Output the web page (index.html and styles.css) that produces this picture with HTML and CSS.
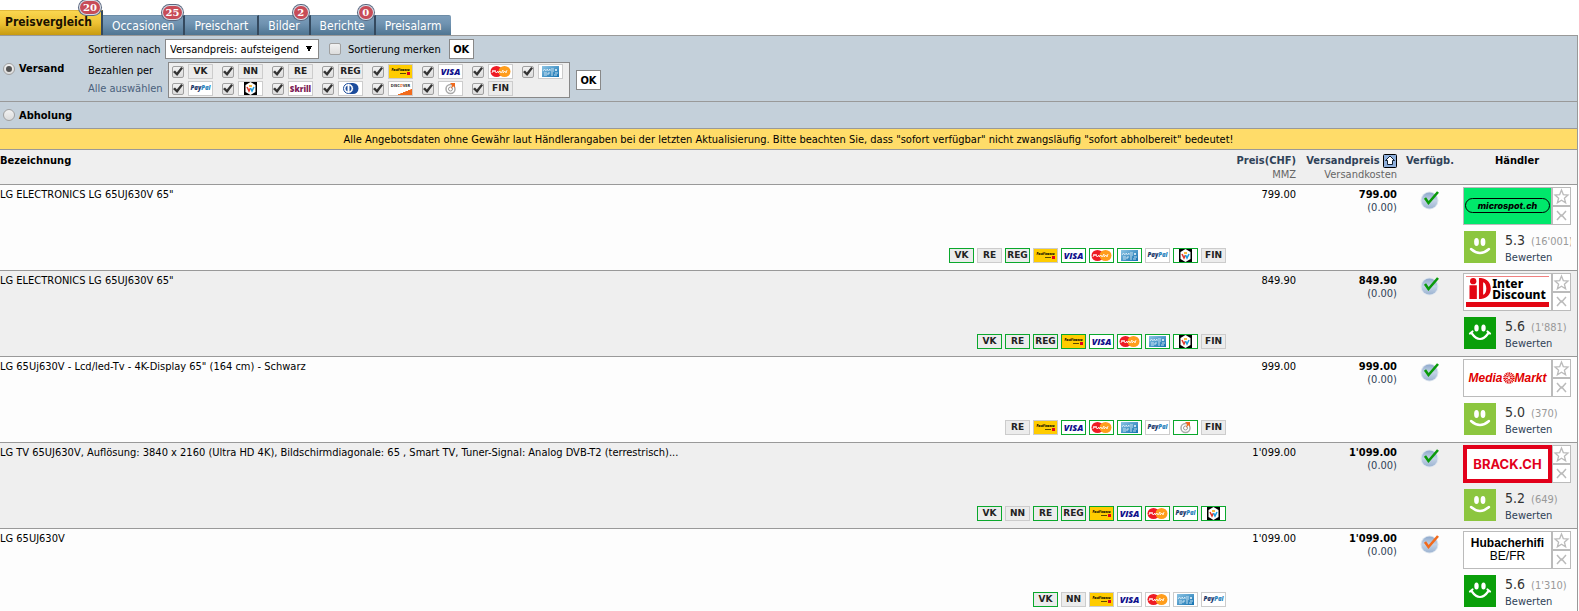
FILE: index.html
```
<!DOCTYPE html>
<html lang="de">
<head>
    <meta charset="UTF-8">
    <meta name="viewport" content="width=device-width, initial-scale=1.0">
    <title>LG 65UJ630V - Preisvergleich</title>
    <link rel="stylesheet" href="styles.css">
</head>
<body>
<!-- Shared icons -->
<svg class="sprite" aria-hidden="true">
    <defs>
        <linearGradient id="disc" x1="0" y1="0" x2="0" y2="1">
            <stop offset="0" stop-color="#8fa9cc"/>
            <stop offset="0.5" stop-color="#c3d3e6"/>
            <stop offset="1" stop-color="#9db4d2"/>
        </linearGradient>
        <linearGradient id="amexBlue" x1="0" y1="0" x2="1" y2="1">
            <stop offset="0" stop-color="#8cc4e4"/>
            <stop offset="1" stop-color="#1170b0"/>
        </linearGradient>
    </defs>
    <symbol id="mastercard" viewBox="0 0 23 13">
        <rect width="23" height="13" fill="#fff"/>
        <ellipse cx="7.500" cy="6.500" rx="6" ry="5.500" fill="#ee1c25"/>
        <ellipse cx="15.500" cy="6.500" rx="6" ry="5.500" fill="#ff9d1c"/>
        <path d="M3 8l1-3 1 2 1-2 1 3 2-2v2l2-2 1 2 2-3v3l2-2 1 2 1-3" fill="none" stroke="#fff" stroke-width="0.800"/>
    </symbol>
    <symbol id="amex" viewBox="0 0 23 13">
        <rect width="23" height="13" fill="#fff"/>
        <rect x="3" y="1" width="17" height="11" fill="url(#amexBlue)"/>
        <path d="M4 6l1.500-2L7 6M8 6V4l1.500 1.500L11 4v2M12 4h3M12 6h3M16 4l2 2M18 4l-2 2M5 8h3M5 10h3M9 10V8h2M12 8h2M12 10h2M16 8h3M15 10h3" fill="none" stroke="#e4f2fa" stroke-width="0.800"/>
    </symbol>
    <symbol id="twint" viewBox="0 0 23 13">
        <rect width="23" height="13" fill="#fff"/>
        <rect x="5" width="13" height="13" fill="#000"/>
        <path d="M11.500 0l5 3v7l-5 3-5-3V3z" fill="#fff"/>
        <path d="M8 5l2 4 1.500-3" stroke="#e23a2e" stroke-width="1.600" fill="none"/>
        <path d="M11.500 6l1.500 3 2-4" stroke="#1ea0e0" stroke-width="1.600" fill="none"/>
        <path d="M10 4h3" stroke="#f7a600" stroke-width="1.500"/>
    </symbol>
    <symbol id="diners" viewBox="0 0 23 13">
        <rect width="23" height="13" fill="#fff"/>
        <path d="M11 1h3a5.500 5.500 0 0 1 0 11h-3z" fill="#1c4c9c"/>
        <circle cx="9.500" cy="6.500" r="5" fill="#fff" stroke="#1c4c9c"/>
        <path d="M8.500 3.500a3.200 3.200 0 0 0 0 6zM10.500 3.500a3.200 3.200 0 0 1 0 6z" fill="#1c4c9c"/>
    </symbol>
    <symbol id="points" viewBox="0 0 23 13">
        <rect width="23" height="13" fill="#fff"/>
        <circle cx="11.500" cy="7" r="4.500" fill="none" stroke="#aaa" stroke-width="1.500"/>
        <circle cx="11.500" cy="7" r="2" fill="none" stroke="#999"/>
        <path d="M11 1h5v5l-1.500-2-2.500 3 1-4z" fill="#f06a1e"/>
    </symbol>
    <symbol id="available" viewBox="0 0 20 20">
        <circle cx="9.500" cy="10.500" r="9" fill="#dde5ee"/>
        <circle cx="9.500" cy="10.500" r="8" fill="url(#disc)"/>
        <path d="M5 8l3.500 5L18 2" fill="none" stroke="currentColor" stroke-width="2.600"/>
    </symbol>
    <symbol id="star" viewBox="0 0 17 17">
        <path d="M8.500 2l1.800 4.600 4.700.4-3.600 3.200 1.200 4.600-4.100-2.600-4.100 2.600 1.200-4.600L2 7l4.700-.4z" fill="#fff" stroke="#bbb" stroke-width="1.300"/>
    </symbol>
    <symbol id="cross" viewBox="0 0 17 17">
        <path d="M4 4l3.500 4h2L13 4M4 13l3.500-4h2l3.500 4" fill="none" stroke="#bbb" stroke-width="1.500"/>
    </symbol>
    <symbol id="smile" viewBox="0 0 32 32">
        <ellipse cx="12.500" cy="11" rx="2.400" ry="4" fill="#fff"/>
        <ellipse cx="19" cy="11" rx="2.400" ry="4" fill="#fff"/>
        <path d="M7 18q9 8 18 0" fill="none" stroke="#fff" stroke-width="2.400" stroke-linecap="round"/>
    </symbol>
    <symbol id="grin" viewBox="0 0 32 32">
        <ellipse cx="12.500" cy="11" rx="2.200" ry="3.600" fill="#fff"/>
        <ellipse cx="19.500" cy="11" rx="2.200" ry="3.600" fill="#fff"/>
        <path d="M7.500 16q8.500 12 17 0M6 16.500l2.500-2M26 16.500l-2.500-2" fill="none" stroke="#fff" stroke-width="2.200" stroke-linecap="round"/>
    </symbol>
</svg>

<nav class="tabs">
    <a href="#" class="tab active">Preisvergleich<span class="count">20</span></a>
    <a href="#" class="tab">Occasionen<span class="count">25</span></a>
    <a href="#" class="tab">Preischart</a>
    <a href="#" class="tab">Bilder<span class="count">2</span></a>
    <a href="#" class="tab">Berichte<span class="count">0</span></a>
    <a href="#" class="tab">Preisalarm</a>
</nav>

<div class="content">
    <form class="filter">
        <div class="shipping">
            <label class="mode"><input type="radio" name="mode" checked> Versand</label>
            <div class="options">
                <div class="line">
                    <label class="caption" for="sort">Sortieren nach</label>
                    <select id="sort">
                        <option>Versandpreis: aufsteigend</option>
                        <option>Versandpreis: absteigend</option>
                    </select>
                    <label class="remember"><input type="checkbox"> Sortierung merken</label>
                    <button type="button">OK</button>
                </div>
                <div class="line">
                    <div class="captions">
                        <span>Bezahlen per</span>
                        <a href="#">Alle auswählen</a>
                    </div>
                    <div class="payments">
                        <label><input type="checkbox" checked><span class="pay">VK</span></label>
                        <label><input type="checkbox" checked><span class="pay">NN</span></label>
                        <label><input type="checkbox" checked><span class="pay">RE</span></label>
                        <label><input type="checkbox" checked><span class="pay">REG</span></label>
                        <label><input type="checkbox" checked><span class="pay postfinance">PostFinance</span></label>
                        <label><input type="checkbox" checked><span class="pay visa">VISA</span></label>
                        <label><input type="checkbox" checked aria-label="Mastercard"><svg class="pay"><use href="#mastercard"/></svg></label>
                        <label><input type="checkbox" checked aria-label="American Express"><svg class="pay"><use href="#amex"/></svg></label>
                        <label><input type="checkbox" checked><span class="pay paypal">Pay<i>Pal</i></span></label>
                        <label><input type="checkbox" checked aria-label="Twint"><svg class="pay"><use href="#twint"/></svg></label>
                        <label><input type="checkbox" checked><span class="pay skrill">Skrill</span></label>
                        <label><input type="checkbox" checked aria-label="Diners Club"><svg class="pay"><use href="#diners"/></svg></label>
                        <label><input type="checkbox" checked><span class="pay discover">DISC<i>O</i>VER</span></label>
                        <label><input type="checkbox" checked aria-label="Punkte"><svg class="pay"><use href="#points"/></svg></label>
                        <label><input type="checkbox" checked><span class="pay">FIN</span></label>
                    </div>
                    <button type="button">OK</button>
                </div>
            </div>
        </div>
        <div class="pickup">
            <label class="mode"><input type="radio" name="mode"> Abholung</label>
        </div>
    </form>

    <p class="notice">Alle Angebotsdaten ohne Gewähr laut Händlerangaben bei der letzten Aktualisierung. Bitte beachten Sie, dass "sofort verfügbar" nicht zwangsläufig "sofort abholbereit" bedeutet!</p>

    <table class="offers">
        <thead>
        <tr>
            <th class="name">Bezeichnung</th>
            <th class="price"><a href="#">Preis(CHF)</a><small>MMZ</small></th>
            <th class="total">
                <a href="#">Versandpreis
                    <svg class="sort-icon" viewBox="0 0 14 14">
                        <rect x="0.500" y="0.500" width="13" height="13" rx="1" fill="#8fb0dc" stroke="#000"/>
                        <path d="M7 2l4.500 4.500H9.500v4h-5v-4h-2z" fill="#fff" stroke="#123" stroke-width="1"/>
                    </svg>
                </a>
                <small>Versandkosten</small>
            </th>
            <th class="stock"><a href="#">Verfügb.</a></th>
            <th class="dealer">Händler</th>
        </tr>
        </thead>
        <tbody>
        <tr>
            <td class="name">
                <div class="offer">
                    <span>LG ELECTRONICS LG 65UJ630V 65"</span>
                    <div class="methods">
                        <span class="pay ok">VK</span>
                        <span class="pay">RE</span>
                        <span class="pay ok">REG</span>
                        <span class="pay postfinance">PostFinance</span>
                        <span class="pay visa ok">VISA</span>
                        <svg class="pay ok"><use href="#mastercard"/></svg>
                        <svg class="pay ok"><use href="#amex"/></svg>
                        <span class="pay paypal">Pay<i>Pal</i></span>
                        <svg class="pay ok"><use href="#twint"/></svg>
                        <span class="pay">FIN</span>
                    </div>
                </div>
            </td>
            <td class="price">799.00</td>
            <td class="total"><b>799.00</b><a href="#">(0.00)</a></td>
            <td class="stock"><svg class="available"><use href="#available"/></svg></td>
            <td class="dealer">
                <div class="shop">
                    <a href="#" class="logo microspot"><span>microspot.ch</span></a>
                    <div class="actions">
                        <button type="button" aria-label="Merken"><svg><use href="#star"/></svg></button>
                        <button type="button" aria-label="Ausblenden"><svg><use href="#cross"/></svg></button>
                    </div>
                </div>
                <div class="rating">
                    <svg class="face good"><use href="#smile"/></svg>
                    <div class="score"><span>5.3 <small>(16'001)</small></span><a href="#">Bewerten</a></div>
                </div>
            </td>
        </tr>
        <tr>
            <td class="name">
                <div class="offer">
                    <span>LG ELECTRONICS LG 65UJ630V 65"</span>
                    <div class="methods">
                        <span class="pay ok">VK</span>
                        <span class="pay ok">RE</span>
                        <span class="pay ok">REG</span>
                        <span class="pay postfinance ok">PostFinance</span>
                        <span class="pay visa ok">VISA</span>
                        <svg class="pay ok"><use href="#mastercard"/></svg>
                        <svg class="pay ok"><use href="#amex"/></svg>
                        <svg class="pay ok"><use href="#twint"/></svg>
                        <span class="pay">FIN</span>
                    </div>
                </div>
            </td>
            <td class="price">849.90</td>
            <td class="total"><b>849.90</b><a href="#">(0.00)</a></td>
            <td class="stock"><svg class="available"><use href="#available"/></svg></td>
            <td class="dealer">
                <div class="shop">
                    <a href="#" class="logo interdiscount">
                        <svg viewBox="0 0 20 20">
                            <circle cx="3.500" cy="3" r="3"/>
                            <path d="M0 7h7v13H0zM9 0c15-1 15 21 0 20zM13 4v12c4-1 4-11 0-12z" fill-rule="evenodd"/>
                        </svg>
                        <span>Inter<br>Discount</span>
                    </a>
                    <div class="actions">
                        <button type="button" aria-label="Merken"><svg><use href="#star"/></svg></button>
                        <button type="button" aria-label="Ausblenden"><svg><use href="#cross"/></svg></button>
                    </div>
                </div>
                <div class="rating">
                    <svg class="face top"><use href="#grin"/></svg>
                    <div class="score"><span>5.6 <small>(1'881)</small></span><a href="#">Bewerten</a></div>
                </div>
            </td>
        </tr>
        <tr>
            <td class="name">
                <div class="offer">
                    <span>LG 65Uj630V - Lcd/led-Tv - 4K-Display 65" (164 cm) - Schwarz</span>
                    <div class="methods">
                        <span class="pay">RE</span>
                        <span class="pay postfinance">PostFinance</span>
                        <span class="pay visa ok">VISA</span>
                        <svg class="pay ok"><use href="#mastercard"/></svg>
                        <svg class="pay ok"><use href="#amex"/></svg>
                        <span class="pay paypal">Pay<i>Pal</i></span>
                        <svg class="pay ok"><use href="#points"/></svg>
                        <span class="pay">FIN</span>
                    </div>
                </div>
            </td>
            <td class="price">999.00</td>
            <td class="total"><b>999.00</b><a href="#">(0.00)</a></td>
            <td class="stock"><svg class="available"><use href="#available"/></svg></td>
            <td class="dealer">
                <div class="shop">
                    <a href="#" class="logo mediamarkt">
                        <span>Media</span>
                        <svg viewBox="0 0 12 12">
                            <circle cx="6" cy="6" r="4.500" fill="none" stroke="#df0000" stroke-width="2.500" stroke-dasharray="1 0.600"/>
                            <circle cx="6" cy="6" r="2" fill="none" stroke="#df0000" stroke-width="2" stroke-dasharray="1 0.600"/>
                        </svg>
                        <span>Markt</span>
                    </a>
                    <div class="actions">
                        <button type="button" aria-label="Merken"><svg><use href="#star"/></svg></button>
                        <button type="button" aria-label="Ausblenden"><svg><use href="#cross"/></svg></button>
                    </div>
                </div>
                <div class="rating">
                    <svg class="face good"><use href="#smile"/></svg>
                    <div class="score"><span>5.0 <small>(370)</small></span><a href="#">Bewerten</a></div>
                </div>
            </td>
        </tr>
        <tr>
            <td class="name">
                <div class="offer">
                    <span>LG TV 65UJ630V, Auflösung: 3840 x 2160 (Ultra HD 4K), Bildschirmdiagonale: 65 , Smart TV, Tuner-Signal: Analog DVB-T2 (terrestrisch)...</span>
                    <div class="methods">
                        <span class="pay ok">VK</span>
                        <span class="pay">NN</span>
                        <span class="pay ok">RE</span>
                        <span class="pay ok">REG</span>
                        <span class="pay postfinance ok">PostFinance</span>
                        <span class="pay visa ok">VISA</span>
                        <svg class="pay ok"><use href="#mastercard"/></svg>
                        <span class="pay paypal ok">Pay<i>Pal</i></span>
                        <svg class="pay ok"><use href="#twint"/></svg>
                    </div>
                </div>
            </td>
            <td class="price">1'099.00</td>
            <td class="total"><b>1'099.00</b><a href="#">(0.00)</a></td>
            <td class="stock"><svg class="available"><use href="#available"/></svg></td>
            <td class="dealer">
                <div class="shop">
                    <a href="#" class="logo brack"><span>BRACK.CH</span></a>
                    <div class="actions">
                        <button type="button" aria-label="Merken"><svg><use href="#star"/></svg></button>
                        <button type="button" aria-label="Ausblenden"><svg><use href="#cross"/></svg></button>
                    </div>
                </div>
                <div class="rating">
                    <svg class="face good"><use href="#smile"/></svg>
                    <div class="score"><span>5.2 <small>(649)</small></span><a href="#">Bewerten</a></div>
                </div>
            </td>
        </tr>
        <tr>
            <td class="name">
                <div class="offer">
                    <span>LG 65UJ630V</span>
                    <div class="methods">
                        <span class="pay ok">VK</span>
                        <span class="pay">NN</span>
                        <span class="pay postfinance">PostFinance</span>
                        <span class="pay visa">VISA</span>
                        <svg class="pay"><use href="#mastercard"/></svg>
                        <svg class="pay"><use href="#amex"/></svg>
                        <span class="pay paypal">Pay<i>Pal</i></span>
                    </div>
                </div>
            </td>
            <td class="price">1'099.00</td>
            <td class="total"><b>1'099.00</b><a href="#">(0.00)</a></td>
            <td class="stock"><svg class="available soon"><use href="#available"/></svg></td>
            <td class="dealer">
                <div class="shop">
                    <a href="#" class="logo hubacher"><span><b>Hubacherhifi</b><br>BE/FR</span></a>
                    <div class="actions">
                        <button type="button" aria-label="Merken"><svg><use href="#star"/></svg></button>
                        <button type="button" aria-label="Ausblenden"><svg><use href="#cross"/></svg></button>
                    </div>
                </div>
                <div class="rating">
                    <svg class="face top"><use href="#grin"/></svg>
                    <div class="score"><span>5.6 <small>(1'310)</small></span><a href="#">Bewerten</a></div>
                </div>
            </td>
        </tr>
        </tbody>
    </table>
</div>
</body>
</html>
```
FILE: styles.css
```
* {
  box-sizing: border-box;
}

body {
  margin: 0;
  font: 11px/13px Tahoma, "DejaVu Sans Condensed", sans-serif;
  color: #000;
  background-color: #fff;
}

a {
  color: #2f4257;
  text-decoration: none;
}

.sprite {
  position: absolute;
  width: 0;
  height: 0;
}

/* Tabs */
.tabs {
  display: flex;
  align-items: flex-end;
  height: 35px;
}

.tab {
  position: relative;
  height: 20px;
  padding: 0 9px;
  font-size: 12px;
  line-height: 20px;
  color: #fff;
  white-space: nowrap;
  background: linear-gradient(#7c9dba, #7093b1 40%, #4f7592);
  border-right: 2px solid #34495e;
  border-top: 1px solid #6d8ca6;
}

.tab.active {
  height: 25px;
  padding: 0 9px 0 5px;
  line-height: 22px;
  font-weight: bold;
  color: #1a1200;
  background: linear-gradient(#fad64f, #eec234 50%, #c79a10);
  border-top-color: #e2b93a;
}

.tab:last-child {
  padding-right: 10px;
  border-right: 0;
  border-top-right-radius: 2px;
}

.count {
  position: absolute;
  top: -10px;
  right: 1px;
  min-width: 14px;
  padding: 0 3px;
  font: bold 10px/13px "DejaVu Serif", serif;
  text-align: center;
  color: #fff;
  background-color: #c74c58;
  border-radius: 7px;
  box-shadow: 0 0 0 1px #d8dde6, 0 0 0 2px #5b6880;
}

/* Filter */
.content {
  margin-right: 1px;
  border-top: 1px solid #999;
  border-right: 1px solid #999;
}

.filter {
  background-color: #c4d0da;
}

.shipping {
  display: flex;
  align-items: center;
  height: 66px;
  border-bottom: 1px solid #999;
}

.pickup {
  display: flex;
  align-items: center;
  height: 27px;
  border-bottom: 1px solid #999;
}

.mode {
  display: flex;
  align-items: center;
  gap: 4px;
  width: 88px;
  padding-left: 3px;
  font-size: 11px;
  font-weight: bold;
}

.options {
  display: flex;
  flex-direction: column;
  gap: 3px;
}

.line {
  display: flex;
  align-items: center;
}

.caption,
.captions {
  width: 77px;
  white-space: nowrap;
}

.captions {
  display: flex;
  flex-direction: column;
  width: 80px;
  line-height: 18px;
}

.captions a {
  color: #4a607c;
}

select {
  appearance: none;
  width: 154px;
  height: 20px;
  padding: 0 4px;
  font: inherit;
  color: #000;
  border: 1px solid #888;
  border-radius: 0;
  background-color: #fff;
  /* Dropdown arrow */
  background-image: linear-gradient(to bottom left, #000 50%, transparent 0), linear-gradient(to bottom right, #000 50%, transparent 0);
  background-size: 3px 6px;
  background-position: right 9px top 6px, right 6px top 6px;
  background-repeat: no-repeat;
}

input[type="checkbox"],
input[type="radio"] {
  appearance: none;
  flex: none;
  display: grid;
  place-items: center;
  width: 12px;
  height: 12px;
  margin: 0;
  border: 1px solid #a0a0a0;
  border-radius: 2px;
  background: linear-gradient(#f2f2f2, #dcdcdc);
}

input[type="radio"] {
  border-radius: 50%;
}

input[type="radio"]:checked::before {
  content: "";
  width: 6px;
  height: 6px;
  border-radius: 50%;
  background-color: #555;
}

input[type="checkbox"]:checked::before {
  content: "";
  width: 10px;
  height: 9px;
  background-color: #333;
  clip-path: polygon(0 55%, 20% 40%, 38% 62%, 82% 0, 100% 14%, 42% 100%);
}

.remember {
  display: flex;
  align-items: center;
  gap: 7px;
  margin: 0 8px 0 10px;
}

button {
  width: 25px;
  height: 20px;
  padding: 0;
  font: bold 11px/13px Tahoma, "DejaVu Sans Condensed", sans-serif;
  background-color: #fff;
  border: 1px solid #888;
}

.payments {
  display: grid;
  grid-template-columns: repeat(7, 50px) 47px;
  row-gap: 2px;
  margin-right: 6px;
  padding: 1px 0 1px 3px;
  background-color: #eee;
  border: 1px solid #888;
}

.payments label {
  display: flex;
  align-items: center;
  gap: 4px;
}

/* Payment badges */
.pay {
  flex: none;
  width: 25px;
  height: 15px;
  font: bold 9px/13px "DejaVu Sans", sans-serif;
  text-align: center;
  white-space: nowrap;
  color: #222;
  background-color: #ececec;
  border: 1px solid #ccc;
}

.pay.ok {
  border-color: #0aa82c;
}

.visa {
  font: italic 800 9px/13px "Open Sans", sans-serif;
  color: #10108c;
  background-color: #fff;
}

.paypal {
  font: italic 800 6px/13px "Open Sans", sans-serif;
  color: #1b3668;
  background-color: #fff;
}

.paypal i {
  color: #2a83bd;
}

.skrill {
  font: 800 8px/13px "Open Sans", sans-serif;
  color: #7c1b56;
  background-color: #fff;
}

.postfinance {
  font: italic 800 3px/10px "Open Sans", sans-serif;
  color: #000;
  background: linear-gradient(#e2001a, #e2001a) 18px 7px / 3px 3px no-repeat, linear-gradient(#5a4a00, #5a4a00) 11px 8px / 6px 1px no-repeat, #fc0;
}

.discover {
  font: bold 4px/8px "Open Sans", sans-serif;
  color: #222;
  background: linear-gradient(to top left, #f26a1b 50%, transparent 52%) right bottom / 15px 6px no-repeat, #fff;
}

.discover i {
  color: #f26a1b;
}

/* Notice */
.notice {
  margin: 0;
  padding: 4px 0 3px;
  text-align: center;
  background-color: #ffdc69;
  border-bottom: 1px solid #999;
}

/* Offers */
.offers {
  width: 100%;
  table-layout: fixed;
  border-collapse: collapse;
}

.offers tr {
  border-bottom: 1px solid #999;
}

.offers thead tr,
.offers tr:nth-child(even) {
  background-color: #efefef;
}

.offers tbody tr:nth-child(odd) {
  background-color: #fdfdfd;
}

.offers th,
.offers td {
  height: 86px;
  padding: 3px 3px 0 0;
  vertical-align: top;
}

.offers thead th {
  height: 34px;
  padding-top: 4px;
}

.offers th.name {
  text-align: left;
}

.offers td.name {
  padding-right: 2px;
}

.offers th small,
.total b,
.total a {
  display: block;
}

.offers th a {
  white-space: nowrap;
}

.offers th small {
  font-size: 11px;
  line-height: 15px;
  font-weight: normal;
  color: #666;
}

th.price {
  width: 71px;
}

th.total {
  width: 101px;
}

th.stock {
  width: 60px;
}

th.dealer {
  width: 117px;
}

.price,
.total {
  text-align: right;
}

.offers .stock {
  padding-right: 0;
  text-align: center;
}

.offers td.stock {
  padding-top: 5px;
}

.sort-icon {
  width: 14px;
  height: 14px;
  margin: -2px 0;
  vertical-align: middle;
}

.offer {
  display: flex;
  flex-direction: column;
  justify-content: space-between;
  min-height: 75px;
}

.methods {
  display: flex;
  justify-content: flex-end;
  gap: 3px;
}

.available {
  width: 20px;
  height: 20px;
  color: #0a9a0a;
}

.available.soon {
  color: #f26a1b;
}

.offers td.dealer {
  padding: 2px 6px 0 3px;
}

.shop {
  display: flex;
}

.logo {
  display: flex;
  align-items: center;
  justify-content: center;
  width: 89px;
  height: 38px;
  color: #000;
  white-space: nowrap;
  background-color: #fff;
  border: 1px solid #bbb;
}

.microspot {
  background-color: #00e86b;
}

.microspot span {
  width: 85px;
  font: italic 800 9px/13px Inter, "Liberation Sans", sans-serif;
  text-align: center;
  border: 1px solid #000;
  border-radius: 8px;
}

.interdiscount {
  gap: 1px;
  padding-bottom: 6px;
  font: 800 12px/11px "Noto Sans", sans-serif;
  background: linear-gradient(#f08080, #f08080) center 2px / 83px 1px no-repeat, linear-gradient(#e30613, #e30613) center 28px / 83px 5px no-repeat, #fff;
}

.interdiscount svg {
  width: 22px;
  height: 21px;
  fill: #e30613;
}

.mediamarkt {
  font: italic bold 12px/14px "Liberation Sans", sans-serif;
  color: #df0000;
}

.mediamarkt svg {
  width: 12px;
  height: 12px;
}

.brack {
  font: bold 13px/16px Inter, sans-serif;
  color: #e2001a;
  border: 4px solid #e2001a;
}

.hubacher {
  font: 12px/13px "Liberation Sans", sans-serif;
  text-align: center;
}

.actions {
  display: flex;
  flex-direction: column;
}

.actions button {
  width: 19px;
  height: 19px;
  border: 1px solid #bbb;
}

.actions svg {
  display: block;
  width: 17px;
  height: 17px;
}

.rating {
  display: flex;
  gap: 9px;
  margin-top: 6px;
  padding-left: 1px;
  overflow: hidden;
}

.face {
  flex: none;
  width: 32px;
  height: 32px;
}

.face.good {
  background-color: #8cc63f;
}

.face.top {
  background-color: #0a9f0a;
}

.score {
  display: flex;
  flex-direction: column;
  white-space: nowrap;
}

.score span {
  font-size: 14px;
  line-height: 18px;
  color: #333;
}

.score small {
  margin-left: 2px;
  font-size: 11px;
  color: #999;
}
```
